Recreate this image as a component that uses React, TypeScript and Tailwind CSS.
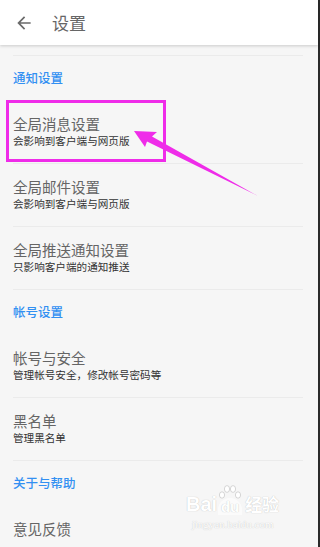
import React from "react";

interface IItem {
  title: string;
  desc?: string;
}

interface ISection {
  header: string;
  items: IItem[];
}

const sections: ISection[] = [
  {
    header: "通知设置",
    items: [
      { title: "全局消息设置", desc: "会影响到客户端与网页版" },
      { title: "全局邮件设置", desc: "会影响到客户端与网页版" },
      { title: "全局推送通知设置", desc: "只影响客户端的通知推送" },
    ],
  },
  {
    header: "帐号设置",
    items: [
      { title: "帐号与安全", desc: "管理帐号安全，修改帐号密码等" },
      { title: "黑名单", desc: "管理黑名单" },
    ],
  },
  {
    header: "关于与帮助",
    items: [{ title: "意见反馈", desc: "" }],
  },
];

const font = { fontFamily: '"Noto Sans CJK SC", "Noto Sans", sans-serif' };

const SettingRow: React.FC<{ item: IItem; last?: boolean }> = ({ item, last }) => (
  <div className="mx-[13px]">
    <div className="h-[62px] pt-[14px]">
      <p className="text-[14.5px] leading-[18px] text-[#656565]">{item.title}</p>
      {item.desc ? (
        <p className="text-[10.6px] leading-[16px] text-[#333]">{item.desc}</p>
      ) : null}
    </div>
    {!last && <div className="h-px bg-[#ebebeb] mr-[2px]" />}
  </div>
);

export default function App() {
  return (
    <div className="relative flex w-[320px] h-[547px] overflow-hidden bg-[#f6f6f6]" style={font}>
      <div className="flex-1 min-w-0">
        {/* top bar */}
        <div className="relative z-10 h-[45px] bg-white flex items-center shadow-[0_1px_3px_rgba(0,0,0,0.18)]">
          <svg viewBox="0 0 24 24" className="ml-[14px] h-[20px] w-[20px]" fill="#6a6a6a">
            <path d="M20 11H7.83l5.59-5.59L12 4l-8 8 8 8 1.41-1.41L7.83 13H20v-2z" />
          </svg>
          <span className="ml-[18px] text-[17px] text-[#666]">设置</span>
        </div>

        <div className="h-[10px]" />
        <div className="ml-[13px] mr-[15px] h-px bg-[#ebebeb]" />

        {sections.map((section, si) => (
          <div key={section.header}>
            <div className="h-[45px] flex items-center px-[13px]">
              <span className="text-[12.5px] font-medium text-[#3290f2]">{section.header}</span>
            </div>
            {section.items.map((item, ii) => (
              <SettingRow
                key={item.title}
                item={item}
                last={si === sections.length - 1 && ii === section.items.length - 1}
              />
            ))}
          </div>
        ))}
      </div>
      <div className="w-[2px] shrink-0 bg-[#2a2a2a]" />

      {/* annotation: highlight box */}
      <div className="absolute left-[6px] top-[100px] w-[160px] h-[62px] border-[3px] border-[#ef2ce9]" />

      {/* annotation: arrow */}
      <svg className="absolute left-0 top-0" width="320" height="547" viewBox="0 0 320 547">
        <polygon
          points="134,131 157,132 152,136.5 258,196 147,141.5 145,147"
          fill="#ef2ce9"
        />
      </svg>

      {/* watermark */}
      <div className="absolute left-[186px] top-[484px] flex flex-col items-center text-white [text-shadow:0_0_1px_#b5b5b5]">
        <div className="flex items-end">
          <span className="text-[20px] font-bold leading-[22px]" style={{ fontFamily: '"Liberation Sans", sans-serif' }}>
            Bai
          </span>
          <span className="relative flex flex-col items-center">
            <svg viewBox="0 0 26 16" width="26" height="16" className="mb-[-2px]">
              <g fill="#fff" stroke="#c4c4c4" strokeWidth="0.7">
                <ellipse cx="5" cy="11" rx="2.6" ry="3.2" />
                <ellipse cx="10" cy="5" rx="2.6" ry="3.4" />
                <ellipse cx="16" cy="5" rx="2.6" ry="3.4" />
                <ellipse cx="21" cy="11" rx="2.6" ry="3.2" />
              </g>
            </svg>
            <span className="text-[15px] font-bold leading-[16px] rounded-t-full px-[3px] pt-[1px] bg-white/60" style={{ fontFamily: '"Liberation Sans", sans-serif' }}>
              du
            </span>
          </span>
          <span className="ml-[2px] text-[17px] font-bold leading-[22px]">经验</span>
        </div>
        <span className="text-[11px] leading-[14px] mt-[2px]" style={{ fontFamily: '"Liberation Serif", serif' }}>
          jingyan.baidu.com
        </span>
      </div>
    </div>
  );
}
